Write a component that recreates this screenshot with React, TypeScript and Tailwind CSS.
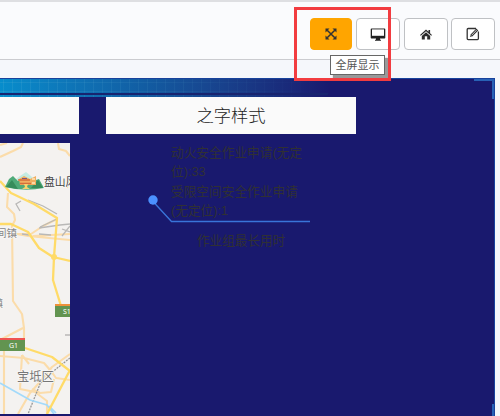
import type { ReactNode } from "react";

const cjk = "font-['Liberation_Sans','Noto_Sans_CJK_SC',sans-serif]";

function ToolButton({ children, active = false }: { children: ReactNode; active?: boolean }) {
  return (
    <button
      className={
        "flex h-8 shrink-0 items-center justify-center rounded border " +
        (active ? "w-[42px] border-[#ffa500] bg-[#ffa500]" : "w-11 border-[#bfc1c4] bg-white")
      }
    >
      {children}
    </button>
  );
}

function ExpandIcon() {
  return (
    <svg width="12" height="12" viewBox="0 0 12 12" fill="#333">
      <path d="M.5.5H4.5L.5 4.5zM7.5.5h4v4zM.5 7.5l4 4h-4zM11.5 7.5v4h-4z" />
      <path d="M2.2 2.2l7.6 7.6M9.8 2.2L2.2 9.8" stroke="#333" strokeWidth="1.5" />
    </svg>
  );
}

function DesktopIcon() {
  return (
    <svg width="16" height="13" viewBox="0 0 16 13">
      <path d="M1.5 .5h13q.8 0 .8.8v8.4q0 .8-.8.8H10v1l1 .5v.8H5V12l1-.5v-1H1.5q-.8 0-.8-.8V1.3q0-.8.8-.8z" fill="#222" />
      <path d="M2 1.4h12v6.4H2z" fill="#fff" />
    </svg>
  );
}

function HomeIcon() {
  return (
    <svg width="12" height="11" viewBox="0 0 12 11">
      <path d="M6 0.5L8.5 2.8V1h1.6v3.2L12 6l-.8.8L6 2.2.8 6.8 0 6z" fill="#2b2b2b" />
      <path d="M6 3.3l4.2 3.8V10.5H7.2V7.3H4.8v3.2H1.8V7.1z" fill="#2b2b2b" />
    </svg>
  );
}

function EditIcon() {
  return (
    <svg width="14" height="14" viewBox="0 0 14 14" fill="none" stroke="#333">
      <path d="M10 1.5H2.2q-1 0-1 1v9.1q0 1 1 1h9.2q1 0 1-1V4.5" strokeWidth="1.3" />
      <path d="M5.3 8.7l6-6.2" strokeWidth="2.6" />
      <path d="M5.8 8.1l4.8-5" stroke="#eee" strokeWidth=".8" />
      <path d="M3.9 10.1l.8-2.2 1.5 1.4z" fill="#333" stroke="none" />
    </svg>
  );
}

function MapView() {
  return (
    <svg width="70" height="271" viewBox="0 143 70 271" className="block" fontFamily="'Noto Sans CJK SC', sans-serif">
      <rect y="143" width="70" height="271" fill="#f4f2f0" />
      <g fill="none" stroke="#fbdcaa" strokeWidth="2.1" strokeLinejoin="round">
        <path d="M0 157L13 151L21 147L23 143M0 145L7 143M58 143L59 149L66 151L70 156M70 175L67 188" />
        <path d="M8 193L7 207L14 214L15 220L12 226L13 301L22 314L24 328L24 341M0 340L23 328" />
        <path d="M0 231L28 236L70 240M0 234L31 234L43 226L57 219M33 236L70 234" />
        <path d="M4 350L4 414M0 356L24 358L44 363L51 371L56 378L70 380M22 355L29 364M22 355L20 389L35 392L47 401L47 414" />
        <path d="M70 354L52 367L39 383L30 393L18 414M54 379L51 392L40 393L32 389" />
      </g>
      <g fill="none" stroke="#b9b8b7" strokeWidth="1.3">
        <path d="M28 200L43 206L57 214M21 201L16 204L20 211M39 228L60 225L70 224M22 234L29 235M39 234L51 235M62 229L70 232M62 236L70 226M40 227L57 219M65 335h5" />
        <path d="M70 358L56 369L40 384L28 414" stroke="#999" strokeDasharray="2 1" />
      </g>
      <path d="M0 383L30 400L47 405L54 414M49 406L56 413" fill="none" stroke="#a3dafa" strokeWidth="1.7" />
      <g fill="none" stroke="#ffdb68" strokeWidth="2.3" strokeLinejoin="round">
        <path d="M0 181L11 193L34 204L57 218L54 257L53 280L61 306M0 224L11 224L28 232L39 248L53 257L70 261" />
        <path d="M25 348L52 357L70 371M70 370L47 414" />
      </g>
      <circle cx="54" cy="257" r="3" fill="#ffdb68" />
      <path d="M15 180L20 176L26 172L32 177L36 181z" fill="#c4ebe2" />
      <path d="M5 187L9 179L13 176L18 181L33 181L39 179L44 188Q24 192 5 187z" fill="#4faa78" />
      <path d="M6 187L12 180L18 189zM31 188L38 180L43 188z" fill="#378c5b" />
      <path d="M19 179L24 176L30 179L36 176L36 185H20z" fill="#f0ae60" />
      <path d="M18 180h12M20 183.5h11" stroke="#d46e3b" strokeWidth="1.4" />
      <path d="M22 178.5h5" stroke="#785984" />
      <path d="M32 178h3v2h-3zM32 182h3v2h-3z" fill="#fbd8a3" />
      <path d="M24 184h4l-1 3 3 2h-8l3-2z" fill="#f5d46d" />
      <g fill="#444" stroke="#f8f7f6" strokeWidth="1.5" paintOrder="stroke">
        <text x="44" y="186" fontSize="10.8">盘山风</text>
        <text x="-4" y="236.5" fontSize="10.5" fill="#888">间镇</text>
        <text x="-7" y="307" fontSize="10" fill="#888">镇</text>
        <text x="17" y="381" fontSize="12.3" fill="#777">宝坻区</text>
      </g>
      <path d="M0 338h25v13H0zM55 304h15v13H55z" fill="#629450" />
      <path d="M0 338h25v2H0z" fill="#ef5350" />
      <path d="M55 304h15v2H55z" fill="#ee9139" />
      <g fill="#fff" fontSize="7" fontFamily="'Noto Sans', sans-serif">
        <text x="9" y="347.5">G1</text>
        <text x="63" y="314">S1</text>
      </g>
    </svg>
  );
}

export default function App() {
  return (
    <div className={"relative h-[416px] w-[500px] overflow-hidden bg-[#f5f7fb] " + cjk}>
      <header className="flex h-[60px] items-start border-t-2 border-b border-t-[#dedfe2] border-b-[#cbccd0] bg-[#fafbfd] pt-4 pl-[310px]">
        <div className="flex gap-1">
          <ToolButton active><ExpandIcon /></ToolButton>
          <div className="flex gap-[3.5px]">
            <ToolButton><DesktopIcon /></ToolButton>
            <ToolButton><HomeIcon /></ToolButton>
            <ToolButton><EditIcon /></ToolButton>
          </div>
        </div>
      </header>

      <main className="relative mt-[18px] h-[338px] w-[495px] overflow-hidden border-t border-r border-[#17429c] bg-[#19196e]">
        <div className="h-[18px] w-[330px] overflow-hidden rounded-br-lg bg-linear-to-r from-[#078dcc] via-[#125ba1] via-45% to-[#19196e]">
          <svg width="330" height="18" className="block">
            <defs>
              <pattern id="grid" width="9" height="9" patternUnits="userSpaceOnUse">
                <path d="M3.5 0V9M0 3.5H9" stroke="#6ab7d5" strokeOpacity=".17" />
              </pattern>
              <linearGradient id="fade">
                <stop offset="0" stopColor="white" />
                <stop offset="1" stopColor="black" />
              </linearGradient>
              <mask id="gridFade"><rect width="330" height="18" fill="url(#fade)" /></mask>
            </defs>
            <rect width="330" height="18" fill="url(#grid)" mask="url(#gridFade)" />
            <path d="M0 15h330" stroke="#18246f" strokeWidth="2" />
          </svg>
        </div>
        <div className="flex">
          <section className="w-[79px]">
            <div className="h-[37px] bg-[#fafafa]" />
            <div className="mt-[9px] w-[70px]"><MapView /></div>
          </section>
          <section className="ml-[27px] w-[250px]">
            <h1 className="h-[37px] bg-[#fafafa] text-center text-[17.3px] leading-[39px] font-light text-[#222]">之字样式</h1>
            <div className="mt-[10px] ml-[65px] w-[140px] text-[12.7px] leading-[19.4px] text-[#303034]">
              <div>动火安全作业申请(无定</div>
              <div>位):33</div>
              <div>受限空间安全作业申请</div>
              <div>(无定位):1</div>
            </div>
            <svg width="170" height="30" className="-mt-[28px] ml-[41px] block">
              <path d="M6 7.5L24.5 27.5H163" fill="none" stroke="#3974d9" strokeWidth="1.3" />
              <circle cx="6" cy="6" r="4.7" fill="#4b91ff" />
            </svg>
            <div className="mt-[8px] ml-[91px] text-[12.6px] leading-[19px] text-[#303034]">作业组最长用时</div>
          </section>
        </div>
        <div className="absolute top-0 right-0 h-5 w-5 border-t-2 border-r-2 border-[#2861b5]" />
        <div className="absolute right-0 bottom-0 h-3 w-0.5 bg-[#2861b5]" />
      </main>
      <div className="absolute top-[55px] left-[330px] flex h-5 w-[55px] items-center justify-center border border-[#666] bg-white text-[11px] text-[#555] shadow-[3px_3px_1px_#999]">全屏显示</div>
      <div className="absolute top-[7px] left-[294px] h-[74px] w-[97px] border-3 border-[#f23c40]" />
    </div>
  );
}
